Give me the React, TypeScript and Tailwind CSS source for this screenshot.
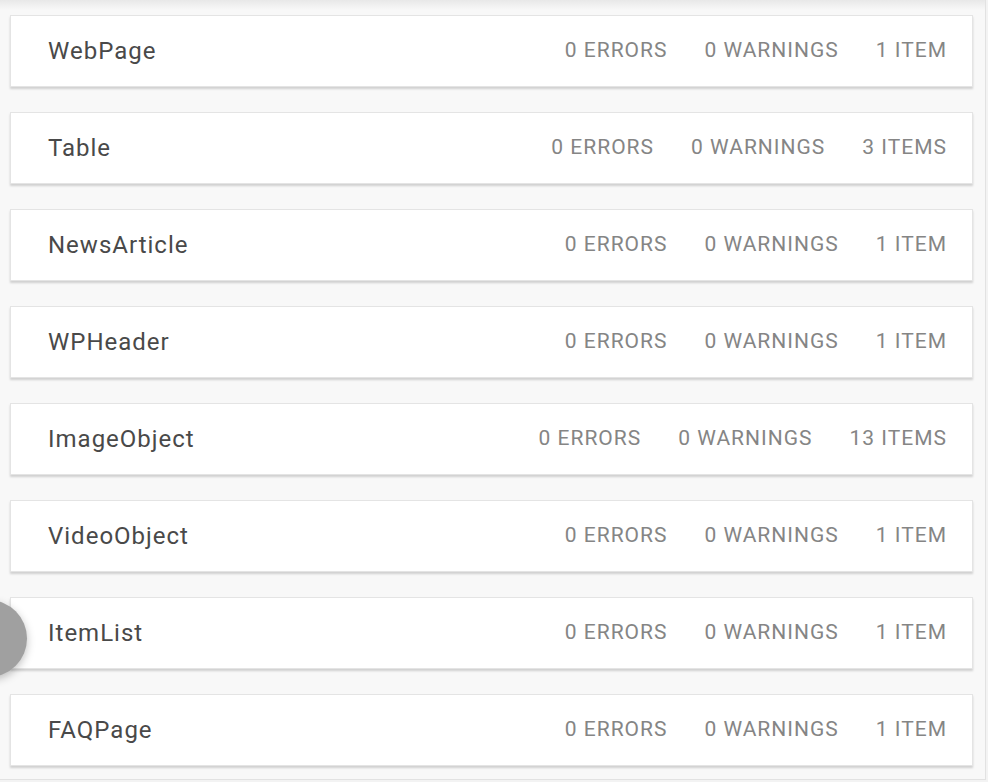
import React from 'react';

interface SchemaRow {
  name: string;
  errors: number;
  warnings: number;
  items: number;
}

const ROWS: SchemaRow[] = [
  { name: 'WebPage', errors: 0, warnings: 0, items: 1 },
  { name: 'Table', errors: 0, warnings: 0, items: 3 },
  { name: 'NewsArticle', errors: 0, warnings: 0, items: 1 },
  { name: 'WPHeader', errors: 0, warnings: 0, items: 1 },
  { name: 'ImageObject', errors: 0, warnings: 0, items: 13 },
  { name: 'VideoObject', errors: 0, warnings: 0, items: 1 },
  { name: 'ItemList', errors: 0, warnings: 0, items: 1 },
  { name: 'FAQPage', errors: 0, warnings: 0, items: 1 },
];

const plural = (n: number, word: string) => `${n} ${word}${n === 1 ? '' : 'S'}`;

const RowCard: React.FC<{ row: SchemaRow }> = ({ row }) => (
  <div className="flex items-center h-[72px] mb-[25px] pl-[37px] pr-[25px] bg-white border border-[#e4e4e4] shadow-[0_2px_2px_rgba(0,0,0,0.16)]">
    <div className="flex-1 text-[24px] tracking-[1px] text-[#494949]">{row.name}</div>
    <div className="flex items-center gap-[37px] text-[21px] tracking-[1px] text-[#858585] uppercase">
      <span>{plural(row.errors, 'ERROR')}</span>
      <span>{plural(row.warnings, 'WARNING')}</span>
      <span>{plural(row.items, 'ITEM')}</span>
    </div>
  </div>
);

export default function App() {
  return (
    <div className="relative w-[988px] h-[782px] overflow-hidden bg-[#f3f3f3] font-['Roboto','Liberation_Sans',sans-serif]">
      <div className="w-[986px] h-[780px] bg-[#f8f8f8] border-r border-b border-[#e2e2e2]">
        {/* top shadow from header above */}
        <div className="h-[10px] bg-gradient-to-b from-[#e8e8e8] to-[#f8f8f8]" />
        <div className="pt-[5px] pl-[10px] pr-[12px]">
          {ROWS.map((row) => (
            <RowCard key={row.name} row={row} />
          ))}
        </div>
      </div>

      {/* partially hidden floating button */}
      <div className="absolute left-[-50px] top-[600px] w-[77px] h-[77px] rounded-full bg-[#a0a0a0] shadow-[0_3px_8px_rgba(0,0,0,0.25)]" />
    </div>
  );
}
